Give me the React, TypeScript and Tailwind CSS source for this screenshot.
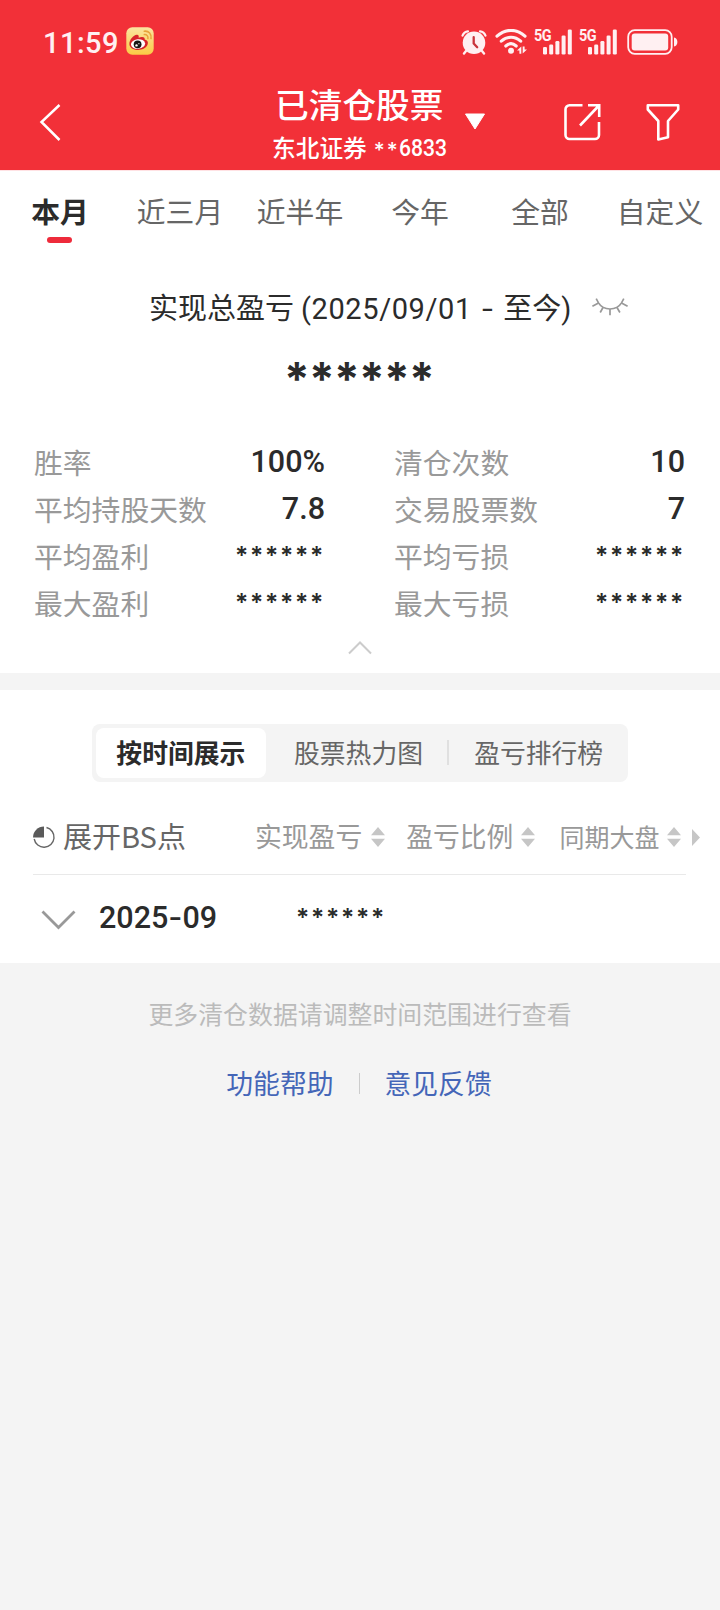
import clsx from "clsx";
import type { ReactNode } from "react";

const periods = ["本月", "近三月", "近半年", "今年", "全部", "自定义"];

const MASK = "******";

const stats = [
    { label: "胜率", value: "100%" },
    { label: "清仓次数", value: "10" },
    { label: "平均持股天数", value: "7.8" },
    { label: "交易股票数", value: "7" },
    { label: "平均盈利", value: MASK },
    { label: "平均亏损", value: MASK },
    { label: "最大盈利", value: MASK },
    { label: "最大亏损", value: MASK },
];

const views = ["按时间展示", "股票热力图", "盈亏排行榜"];

function Num({
    children,
    className,
}: {
    children: ReactNode;
    className?: string;
}) {
    return (
        <span className={clsx("font-['Roboto','Noto_Sans_CJK_SC',sans-serif]", className)}>
            {children}
        </span>
    );
}

function Mask({ className }: { className?: string }) {
    return (
        <span
            className={clsx(
                "block font-['Inter',sans-serif] whitespace-nowrap text-[#2b2b2b]",
                className,
            )}
        >
            {MASK}
        </span>
    );
}

function WeiboIcon() {
    return (
        <svg className="size-[28px]" viewBox="0 0 28 28">
            <defs>
                <linearGradient id="weibo" x1="0" x2="0" y1="0" y2="1">
                    <stop offset="0" stopColor="#fbe5a0" />
                    <stop offset="1" stopColor="#fbc945" />
                </linearGradient>
            </defs>
            <rect fill="url(#weibo)" height="27.4" rx="6" width="27.4" x="0.3" y="0.3" />
            <path
                d="M3.4 17.2C3.2 13 7.6 7.6 11 7.8c1.8.1 2 1.6 1.6 2.9 3-1.3 6.6-1.2 6.1 1.9 3.8 1 3.6 3.8 2.6 5.7C19.8 21.1 16 23 12 23c-4.8 0-8.4-2.4-8.6-5.8z"
                fill="#d8232a"
            />
            <ellipse cx="12" cy="17" fill="#fff" rx="7.1" ry="4.8" transform="rotate(-7 12 17)" />
            <circle cx="11.6" cy="17.3" fill="#151515" r="3.9" />
            <circle cx="10.5" cy="18.4" fill="#fff" r="1.2" />
            <circle cx="12.9" cy="16.7" fill="#fff" r="0.6" />
            <path
                d="M18.3 7.6c2.6-.2 4 1.6 3.6 4M18.2 4.2c4.6-.6 7.6 2.8 6.8 7.4"
                fill="none"
                stroke="#e8a33a"
                strokeLinecap="round"
                strokeWidth="1.5"
            />
        </svg>
    );
}

function AlarmIcon() {
    return (
        <svg className="h-[25px] w-[26px]" fill="none" viewBox="0 0 26 25">
            <path
                d="M1.5 5.6C2.4 3.2 4.4 1.6 7 1.3M24.5 5.6C23.6 3.2 21.6 1.6 19 1.3"
                stroke="#fff0f2"
                strokeLinecap="round"
                strokeWidth="2.2"
            />
            <path
                d="M5 21l-2 2.5M21 21l2 2.5"
                stroke="#fff0f2"
                strokeLinecap="round"
                strokeWidth="2.4"
            />
            <circle cx="13" cy="12.8" fill="#fff0f2" r="11.3" />
            <path
                d="M12.7 7.2v6.3l3.5 3.7"
                stroke="#c9343c"
                strokeLinecap="round"
                strokeLinejoin="round"
                strokeWidth="2.3"
            />
        </svg>
    );
}

function WifiIcon() {
    return (
        <svg className="h-[26px] w-[33px]" fill="none" viewBox="0 0 33 26">
            <g stroke="#fff0f2" strokeLinecap="round" strokeWidth="3.1">
                <path d="M2 7.2C10.5-.6 21.5-.6 30 7.2" />
                <path d="M6.3 12.2c5.8-5.3 13.6-5.3 19.4 0" />
                <path d="M10.8 17c3.2-2.8 7.2-2.8 10.4 0" />
            </g>
            <circle cx="16" cy="21.8" fill="#fff0f2" r="3" />
            <path d="M22 21.6l4.3-4v7.2h-1.9v-3.2zM32 20.6l-4.3 4v-7.2h1.9v3.2z" fill="#fff0f2" />
        </svg>
    );
}

function SignalIcon() {
    return (
        <div className="relative h-[26px] w-[38px]">
            <span className="absolute top-[-1px] left-0 origin-left scale-x-[0.9] font-['Roboto',sans-serif] text-[16px] leading-[16px] font-bold tracking-[-0.5px] text-[#fff0f2]">
                5G
            </span>
            <svg className="size-full" viewBox="0 0 38 26">
                <g fill="#fff0f2">
                    <rect height="7.5" rx="1.3" width="4" x="9" y="18" />
                    <rect height="10" rx="1.3" width="4" x="15.2" y="15.5" />
                    <rect height="13.5" rx="1.3" width="4" x="21.4" y="12" />
                    <rect height="19" rx="1.3" width="4" x="27.6" y="6.5" />
                    <rect height="25" rx="1.3" width="4" x="33.8" y="0.5" />
                </g>
            </svg>
        </div>
    );
}

function BatteryIcon() {
    return (
        <svg className="h-[26px] w-[51px]" viewBox="0 0 51 26">
            <rect
                fill="none"
                height="23.6"
                rx="6.5"
                stroke="#fff0f2"
                strokeWidth="1.8"
                width="43.5"
                x="1.2"
                y="1.2"
            />
            <rect fill="#fff0f2" height="17" rx="3" width="36.5" x="4.7" y="4.5" />
            <path d="M47 8.5c4.5.3 4.5 8.7 0 9z" fill="#fff0f2" />
        </svg>
    );
}

function SortIcon() {
    return (
        <svg className="h-[20px] w-[14px] shrink-0" viewBox="0 0 14 20">
            <path d="M7 0l7 8.2H0zM7 20l7-8.2H0z" fill="#c6c6c6" />
        </svg>
    );
}

function EyeClosedIcon() {
    return (
        <svg
            className="h-[18px] w-[36px]"
            fill="none"
            stroke="#999"
            strokeWidth="1.7"
            viewBox="0 0 36 18"
        >
            <path d="M4.2.7l2.3 4.2C11.5 13 24.5 13 29.5 4.9L31.8.7" />
            <path d="M6.5 4.9L.4 8.2M29.5 4.9l6.1 3.3M11 9.5l-2.8 5M18 11v6.2M25 9.5l2.9 5" />
        </svg>
    );
}

function StatusBar() {
    return (
        <div className="flex h-[82px] items-center pr-[42px] pl-[43px]">
            <Num className="mt-[3px] w-[83px] text-[29px] leading-[32px] font-medium tracking-[0.5px] text-[#fff0f2]">
                11:59
            </Num>
            <WeiboIcon />
            <div className="flex-1" />
            <div className="flex items-center gap-[8px] pt-[2px]">
                <AlarmIcon />
                <WifiIcon />
                <div className="mr-[2px] -ml-[2px] flex gap-[7px]">
                    <SignalIcon />
                    <SignalIcon />
                </div>
                <BatteryIcon />
            </div>
        </div>
    );
}

function TitleBar() {
    return (
        <div className="flex h-[88px] pr-[40px] pl-[39px] text-white">
            <svg
                className="mt-[21px] h-[38px] w-[22px]"
                fill="none"
                stroke="currentColor"
                strokeWidth="2.5"
                viewBox="0 0 22 38"
            >
                <path d="M20.5 2L2.5 19l18 18" />
            </svg>
            <div className="ml-[211px] flex">
                <div className="w-[178px]">
                    <h1 className="mt-[2px] ml-[3px] text-[33.7px] leading-[40px] font-medium">
                        已清仓股票
                    </h1>
                    <p className="mt-[4px] flex w-[180px] items-center text-[23.7px] leading-[34px] font-medium whitespace-nowrap">
                        东北证券
                        <span className="mt-[8px] ml-[7px] font-['Inter',sans-serif] text-[21px] leading-[20px] tracking-[2px]">
                            **
                        </span>
                        <Num className="mt-[3px] ml-[-1px] origin-left scale-x-[0.88] text-[24px]">
                            6833
                        </Num>
                    </p>
                </div>
                <svg className="mt-[31px] ml-[14px] h-[17px] w-[22px]" viewBox="0 0 22 17">
                    <path
                        d="M1.5 1h19L11 16z"
                        fill="currentColor"
                        stroke="currentColor"
                        strokeLinejoin="round"
                    />
                </svg>
            </div>
            <div className="mt-[21px] ml-auto flex gap-[45px]">
                <svg
                    className="h-[38px] w-[37px]"
                    fill="none"
                    stroke="currentColor"
                    strokeWidth="2.6"
                    viewBox="0 0 37 38"
                >
                    <path d="M18.5 2.3H5.500a4 4 0 0 0-4 4V32a4 4 0 0 0 4 4H31a4 4 0 0 0 4-4V19" />
                    <path d="M24 2.3h11.2V14M35 2.500L16 22.500" />
                </svg>
                <svg
                    className="h-[38px] w-[34px]"
                    fill="none"
                    stroke="currentColor"
                    strokeLinejoin="round"
                    strokeWidth="2.6"
                    viewBox="0 0 34 38"
                >
                    <path d="M1.8 2.3h30.4v4.2L22 18v16.2L12.3 36.5V18L1.8 6.5z" />
                </svg>
            </div>
        </div>
    );
}

function PeriodTabs() {
    return (
        <nav className="grid h-[84px] grid-cols-6 text-center text-[28.8px] leading-[40px] text-[#666]">
            {periods.map((period, i) => (
                <div
                    className={clsx(
                        "flex flex-col items-center pt-[20px] whitespace-nowrap",
                        i === 0 && "font-bold text-[#2b2b2b]",
                    )}
                    key={period}
                >
                    {period}
                    {i === 0 && (
                        <span className="mt-[6px] mr-[1px] h-[6px] w-[25px] rounded-full bg-[#ee2b3b]" />
                    )}
                </div>
            ))}
        </nav>
    );
}

function Summary() {
    return (
        <section className="h-[418px]">
            <div className="flex items-center pt-[31px] pl-[149px]">
                <h2 className="text-[29px] leading-[40px] whitespace-nowrap text-[#2b2b2b]">
                    实现总盈亏
                    <Num className="ml-[7px] tracking-[0.6px]">(2025/09/01</Num>
                    <span className="mr-[9px] ml-[9px] font-['Inter',sans-serif]">-</span>
                    至今
                    <Num>)</Num>
                </h2>
                <span className="-mt-[2px] ml-[21px]">
                    <EyeClosedIcon />
                </span>
            </div>
            <Mask className="mt-[25px] h-[42px] pl-[284px] text-[46px] leading-[50px] font-bold tracking-[-0.7px]" />
            <div className="mt-[47px] grid grid-cols-2 gap-x-[69px] pr-[35px] pl-[34px]">
                {stats.map((stat) => (
                    <div className="flex h-[47px] justify-between" key={stat.label}>
                        <span className="text-[28.8px] leading-[38px] text-[#999]">
                            {stat.label}
                        </span>
                        {stat.value === MASK ? (
                            <Mask className="text-[24.5px] leading-[37px] font-semibold tracking-[1.8px]" />
                        ) : (
                            <Num className="text-[30.5px] leading-[38px] font-medium text-[#2b2b2b]">
                                {stat.value}
                            </Num>
                        )}
                    </div>
                ))}
            </div>
            <svg
                className="mx-auto mt-[10px] h-[14px] w-[24px]"
                fill="none"
                stroke="#ccc"
                strokeWidth="2"
                viewBox="0 0 24 14"
            >
                <path d="M1 12.5l11-11 11 11" />
            </svg>
        </section>
    );
}

function ViewSwitch() {
    return (
        <div className="mx-auto grid h-[58px] w-[536px] grid-cols-3 rounded-[8px] bg-[#f4f4f4] text-center text-[25.8px] text-[#666]">
            {views.map((view, i) => (
                <div
                    className={clsx(
                        "my-[4px] leading-[48px]",
                        i === 0 && "mr-[5px] ml-[4px] rounded-[8px] bg-white font-bold text-[#2b2b2b]",
                        i === 1 && "pr-[3px]",
                        i === 2 &&
                            "flex items-center justify-center pb-[2px] before:mr-[25px] before:-ml-[27px] before:h-[25px] before:w-[2px] before:bg-[#e0e0e0]",
                    )}
                    key={view}
                >
                    {view}
                </div>
            ))}
        </div>
    );
}

function TableHeader() {
    return (
        <div className="mr-[34px] ml-[33px] flex h-[75px] items-center border-b border-[#e9e9e9] whitespace-nowrap text-[#999]">
            <svg className="size-[23px] shrink-0" viewBox="0 0 23 23">
                <path
                    d="M13.5 1.5A10 10 0 1 1 1.2 13"
                    fill="none"
                    stroke="#666"
                    strokeWidth="1.4"
                />
                <path d="M11 .5V11.5H0A11 11 0 0 1 11 .5z" fill="#5a5a5a" />
            </svg>
            <span className="mt-[-4px] ml-[7px] w-[192px] shrink-0 text-[29px] leading-[40px] text-[#666]">
                展开BS点
            </span>
            <span className="mt-[-2px] mr-[9px] text-[26.8px] leading-[40px]">实现盈亏</span>
            <SortIcon />
            <span className="mt-[-2px] mr-[8px] ml-[21px] text-[26.8px] leading-[40px]">盈亏比例</span>
            <SortIcon />
            <span className="mt-[-3px] mr-[8px] ml-[24px] text-[25px] leading-[40px]">同期大盘</span>
            <SortIcon />
            <svg className="ml-[11px] h-[17px] w-[8px] shrink-0" viewBox="0 0 8 17">
                <path d="M0 0l8 8.5L0 17z" fill="#c6c6c6" />
            </svg>
        </div>
    );
}

function MonthRow() {
    return (
        <div className="flex h-[88px] items-center pl-[41px]">
            <svg
                className="mt-[2px] h-[20px] w-[35px]"
                fill="none"
                stroke="#999"
                strokeWidth="2.8"
                viewBox="0 0 35 20"
            >
                <path d="M1.5 1.5l16 16 16-16" />
            </svg>
            <Num className="mt-[-4px] ml-[23px] w-[197px] text-[30.5px] leading-[40px] font-medium text-[#2b2b2b]">
                2025<span className="font-['Inter',sans-serif]">-</span>09
            </Num>
            <Mask className="mt-[-4px] text-[24.5px] leading-[40px] font-semibold tracking-[1.8px]" />
        </div>
    );
}

export default function App() {
    return (
        <div className="h-[1610px] w-[720px] overflow-hidden bg-[#f4f4f4] font-['Noto_Sans_CJK_SC',sans-serif]">
            <header className="h-[170px] bg-[#f23038]">
                <StatusBar />
                <TitleBar />
            </header>
            <div className="border-t border-[#ffe2e4] bg-white">
                <PeriodTabs />
                <Summary />
            </div>
            <section className="mt-[17px] h-[273px] bg-white pt-[34px]">
                <ViewSwitch />
                <div className="pt-[18px]">
                    <TableHeader />
                </div>
                <MonthRow />
            </section>
            <footer className="text-center">
                <p className="mt-[30px] text-[24.9px] leading-[40px] text-[#bbb]">
                    更多清仓数据请调整时间范围进行查看
                </p>
                <div className="mt-[30px] mr-[2px] flex items-center justify-center text-[26.8px] leading-[40px] text-[#4466b8]">
                    <span>功能帮助</span>
                    <span className="mx-[25px] h-[21px] w-px bg-[#ccc]" />
                    <span>意见反馈</span>
                </div>
            </footer>
        </div>
    );
}
